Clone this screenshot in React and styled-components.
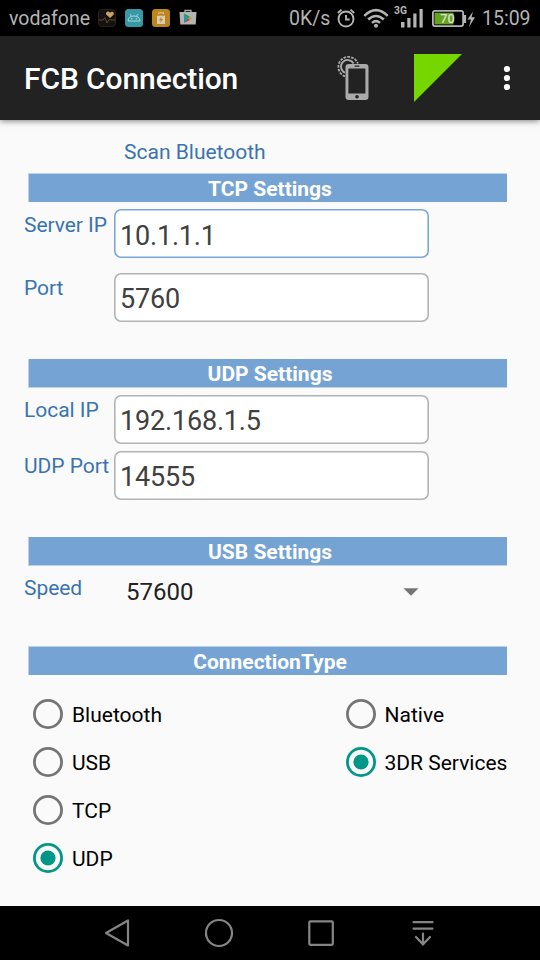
import React, { useState } from "react";
import styled, { createGlobalStyle } from "styled-components";

const GlobalStyle = createGlobalStyle`
  * { box-sizing: border-box; }
  body { margin: 0; background: #fafafa; font-family: Roboto, "Liberation Sans", sans-serif; }
`;

const Screen = styled.div`
  width: 540px;
  height: 960px;
  display: flex;
  flex-direction: column;
  overflow: hidden;
  background: #fafafa;
`;

const StatusBar = styled.header`
  height: 36px;
  flex: none;
  display: flex;
  align-items: center;
  justify-content: space-between;
  padding: 0 9px;
  background: #000;
  color: #b4b4b4;
`;

const StatusGroup = styled.div`
  display: flex;
  align-items: center;
`;

const StatusText = styled.span`
  font-size: 19.5px;
  line-height: 36px;
  padding-top: 1px;
  height: 36px;
  width: ${(p) => p.$width}px;
  margin-left: ${(p) => p.$gap || 0}px;
  white-space: nowrap;
`;

const StatusIcon = styled.svg`
  display: block;
  flex: none;
  margin-left: ${(p) => p.$gap || 0}px;
`;

const Toolbar = styled.div`
  height: 84px;
  flex: none;
  display: flex;
  align-items: center;
  padding-left: 24px;
  background: #222;
  box-shadow: 0 1px 6px rgba(0, 0, 0, 0.5);
`;

const Title = styled.h1`
  margin: 2px 0 0;
  width: 306px;
  font-size: 30px;
  line-height: 36px;
  font-weight: 500;
  letter-spacing: -0.1px;
  color: #fff;
  white-space: nowrap;
`;

const ToolIcon = styled.svg`
  display: block;
  flex: none;
  margin-left: ${(p) => p.$gap || 0}px;
`;

const Content = styled.main`
  flex: 1;
  padding: 20px 33px 0 24px;
  color: #3a74b0;
`;

const ScanButton = styled.button`
  display: block;
  height: 33px;
  margin: 0 0 0 100px;
  padding: 0 0 9px;
  border: 0;
  background: none;
  font: inherit;
  font-size: 21px;
  line-height: 24px;
  color: inherit;
`;

const Section = styled.section`
  height: ${(p) => p.$height}px;
`;

const SectionBar = styled.h2`
  height: 29px;
  margin: 0 0 0 4px;
  border: 0 solid #bcd2e9;
  border-left-width: 1px;
  border-top-width: ${(p) => (p.$edge === "top" ? 1 : 0)}px;
  border-bottom-width: ${(p) => (p.$edge === "bottom" ? 1 : 0)}px;
  padding-top: 1px;
  padding-left: 4px;
  background: #75a3d3;
  color: #fff;
  font-size: 21px;
  line-height: 28px;
  font-weight: 700;
  text-align: center;
`;

const Field = styled.div`
  display: flex;
  margin-top: ${(p) => p.$gap}px;
`;

const Label = styled.label`
  flex: none;
  width: 90px;
  padding-top: ${(p) => (p.$active ? 4 : 3)}px;
  font-size: 21px;
  line-height: 24px;
  letter-spacing: -0.05px;
  white-space: nowrap;
`;

const Input = styled.input`
  width: 315px;
  height: 49px;
  padding: ${(p) => (p.$active ? 4 : 3)}px 6px 0;
  border: 0;
  border-radius: 7px;
  outline: 0;
  background: #fff;
  box-shadow: inset 0 0 0 1.6px ${(p) => (p.$active ? "#7ba7d7" : "#b3b3b3")};
  color: #404040;
  font-family: inherit;
  font-size: 27px;
  letter-spacing: -0.18px;
`;

const Spinner = styled.div`
  display: flex;
  align-items: center;
  justify-content: space-between;
  width: 315px;
  height: 37px;
  padding: 0 10px 0 12px;
  color: #222;
  font-size: 24px;
`;

const RadioColumns = styled.div`
  display: grid;
  grid-template-columns: 312.5px 1fr;
  align-items: start;
  padding: 15px 0 0 9px;
`;

const RadioOption = styled.label`
  display: flex;
  align-items: center;
  gap: 9px;
  height: 48px;
  color: #000;
  font-size: 21px;
  line-height: 24px;
  white-space: nowrap;
  span { padding-top: 2px; }
  svg { flex: none; }
`;

const NavBar = styled.nav`
  height: 54px;
  flex: none;
  display: flex;
  align-items: center;
  justify-content: space-between;
  padding: 0 102px;
  background: #000;
`;

const NavIcon = styled.svg`
  width: 30px;
  height: 34px;
  fill: none;
  stroke: #858585;
  stroke-width: 2.2;
  stroke-linecap: round;
`;

function Radio({ label, checked, onSelect }) {
  const color = checked ? "#009688" : "#757575";
  return (
    <RadioOption onClick={onSelect}>
      <svg width="30" height="30" viewBox="0 0 30 30">
        <circle cx="15" cy="15" r="13.6" fill="none" stroke={color} strokeWidth="2.8" />
        {checked && <circle cx="15" cy="15" r="7.6" fill={color} />}
      </svg>
      <span>{label}</span>
    </RadioOption>
  );
}

function TextField({ label, value, gap, active }) {
  return (
    <Field $gap={gap}>
      <Label $active={active}>{label}</Label>
      <Input defaultValue={value} $active={active} aria-label={label} />
    </Field>
  );
}

function StatusRow() {
  return (
    <StatusBar>
      <StatusGroup>
        <StatusText $width={89}>vodafone</StatusText>
        <StatusIcon width="18" height="18" viewBox="0 0 18 18">
          <rect x=".5" y=".5" width="17" height="17" rx="3.5" fill="#14110f" stroke="#2b2016" />
          <path d="M12 9 L8.2 5.5 Q7.5 3 9.7 2.5 Q11.3 2.4 12 3.8 Q13 2.4 14.5 2.7 Q16.5 3.5 15.5 5.8Z" fill="#c7a365" />
          <path d="M1 11H5L7 8.5 9 14 11 10.5 13 11H17" fill="none" stroke="#5b4a38" />
        </StatusIcon>
        <StatusIcon $gap={9} width="18" height="18" viewBox="0 0 18 18">
          <rect width="18" height="18" rx="3.5" fill="#359aa5" />
          <path d="M3 12Q3.3 7 9 7T15 12ZM5 5L6.7 7.5M13 5L11.3 7.5" fill="none" stroke="#b3d4d5" />
          <circle cx="6.7" cy="9.7" r=".7" fill="#b3d4d5" />
          <circle cx="11.3" cy="9.7" r=".7" fill="#b3d4d5" />
        </StatusIcon>
        <StatusIcon $gap={9} width="18" height="18" viewBox="0 0 18 18">
          <rect width="18" height="18" rx="3.5" fill="#bd861d" />
          <path d="M6.5 5V3.8H11.5V5" fill="none" stroke="#d9cdb8" />
          <path d="M5 6.7H13V15H5Z" fill="#d9cdb8" />
          <path d="M9.8 7.5L6.9 11.2H8.7L8.2 14 11.1 10H9.2Z" fill="#bd861d" />
        </StatusIcon>
        <StatusIcon $gap={9} width="18" height="18" viewBox="0 0 18 18">
          <path d="M6 4V1.5H12V4" fill="none" stroke="#aaa" strokeWidth="1.3" />
          <path d="M.5 3H17.5L16.7 15.5H1.3Z" fill="#b4b4b4" />
          <path d="M5 4.5L9 9.3 5 14Z" fill="#159cb4" />
          <path d="M5 4.5L11 7.8 9 9.3Z" fill="#278d4e" />
          <path d="M5 14L9 9.3 11 10.9Z" fill="#bd3f31" />
          <path d="M11 7.8L13 9.3 11 10.9 9 9.3Z" fill="#c99c28" />
        </StatusIcon>
      </StatusGroup>
      <StatusGroup>
        <StatusText $width={48}>0K/s</StatusText>
        <StatusIcon width="18" height="20" viewBox="0 0 18 20" fill="none" stroke="#b4b4b4" strokeWidth="1.9">
          <circle cx="9" cy="11" r="7.5" />
          <path d="M9 7V11.5H12.7M.8 5L4.5 1.6M17.2 5L13.5 1.6" />
        </StatusIcon>
        <StatusIcon $gap={8} width="26" height="20" viewBox="0 0 26 20" fill="none" stroke="#b4b4b4" strokeWidth="2.5">
          <path d="M1.3 7.8Q13 -3.5 24.7 7.8M5.2 11.5Q13 4.4 20.8 11.5M9 14.9Q13 11.4 17 14.9" />
          <circle cx="13" cy="17.7" r="2" fill="#b4b4b4" stroke="none" />
        </StatusIcon>
        <StatusIcon $gap={5} width="30" height="26" viewBox="0 0 30 26" fill="#b4b4b4">
          <text x="0" y="8.7" fontSize="10.5" fontWeight="700" fontFamily="Roboto, sans-serif" textLength="13" lengthAdjust="spacingAndGlyphs">3G</text>
          <rect x="7" y="17" width="3.5" height="5.5" />
          <rect x="13.3" y="13" width="3.2" height="9.5" />
          <rect x="19.3" y="8.5" width="3.2" height="14" />
          <rect x="25.5" y="4" width="3.2" height="18.5" />
        </StatusIcon>
        <StatusIcon $gap={8} width="44" height="20" viewBox="0 0 44 20">
          <rect x=".9" y="2.9" width="30.2" height="15.2" rx="2" fill="none" stroke="#b4b4b4" strokeWidth="1.8" />
          <rect x="31.8" y="7" width="2.3" height="8" fill="#b4b4b4" />
          <rect x="2.5" y="4.7" width="19" height="11.7" fill="#64a41a" />
          <text x="8.3" y="15.3" fontSize="13.5" fontWeight="500" fontFamily="Roboto, sans-serif" fill="#ddd" textLength="14.5" lengthAdjust="spacingAndGlyphs">70</text>
          <path d="M41 3.5L35.5 11.5H39L37 19 43 9.3H39.5Z" fill="#b4b4b4" />
        </StatusIcon>
        <StatusText $gap={6} $width={49}>15:09</StatusText>
      </StatusGroup>
    </StatusBar>
  );
}

export default function App() {
  const [type, setType] = useState("UDP");
  const [service, setService] = useState("3DR Services");
  return (
    <Screen>
      <GlobalStyle />
      <StatusRow />
      <Toolbar>
        <Title>FCB Connection</Title>
        <ToolIcon $gap={6} width="34" height="48" viewBox="0 0 34 48">
          <g fill="none" stroke="#aaa">
            <path d="M9 22.3A10 10 0 1 1 21.8 9.5" strokeWidth="1.8" strokeDasharray="2.6 1.2" />
            <path d="M9 18.8A6.7 6.7 0 1 1 17.6 9.5" strokeWidth="1.8" />
          </g>
          <rect x="9.5" y="10" width="23" height="36" rx="3.2" fill="#aaa" />
          <rect x="12.4" y="14.5" width="17" height="25" fill="#222" />
          <rect x="18.5" y="11.6" width="5" height="1.2" rx=".6" fill="#222" />
          <circle cx="21" cy="42.8" r="1.8" fill="#222" />
        </ToolIcon>
        <ToolIcon $gap={44} width="48" height="48" viewBox="0 0 48 48">
          <path d="M0 0H48L0 48Z" fill="#76d600" />
        </ToolIcon>
        <ToolIcon $gap={42} width="6" height="26" viewBox="0 0 6 26" fill="#fff" overflow="visible">
          <circle cx="3" cy="4" r="3.1" />
          <circle cx="3" cy="13" r="3.1" />
          <circle cx="3" cy="22" r="3.1" />
        </ToolIcon>
      </Toolbar>
      <Content>
        <ScanButton>Scan Bluetooth</ScanButton>
        <Section $height={186}>
          <SectionBar $edge="top">TCP Settings</SectionBar>
          <TextField label="Server IP" value="10.1.1.1" gap={7} active />
          <TextField label="Port" value="5760" gap={15} />
        </Section>
        <Section $height={178}>
          <SectionBar $edge="bottom">UDP Settings</SectionBar>
          <TextField label="Local IP" value="192.168.1.5" gap={7} />
          <TextField label="UDP Port" value="14555" gap={7} />
        </Section>
        <Section $height={109}>
          <SectionBar $edge="bottom">USB Settings</SectionBar>
          <Field $gap={7}>
            <Label>Speed</Label>
            <Spinner>
              57600
              <svg width="16" height="8" viewBox="0 0 16 8">
                <path d="M.5 .3H15.5L8 7.7Z" fill="#757575" />
              </svg>
            </Spinner>
          </Field>
        </Section>
        <SectionBar $edge="top">ConnectionType</SectionBar>
        <RadioColumns>
          <div>
            {["Bluetooth", "USB", "TCP", "UDP"].map((name) => (
              <Radio key={name} label={name} checked={type === name} onSelect={() => setType(name)} />
            ))}
          </div>
          <div>
            {["Native", "3DR Services"].map((name) => (
              <Radio key={name} label={name} checked={service === name} onSelect={() => setService(name)} />
            ))}
          </div>
        </RadioColumns>
      </Content>
      <NavBar>
        <NavIcon viewBox="0 0 30 34">
          <path d="M26 4.5V29.5L4 17Z" strokeLinejoin="round" />
        </NavIcon>
        <NavIcon viewBox="0 0 30 34">
          <circle cx="15" cy="17" r="13" />
        </NavIcon>
        <NavIcon viewBox="0 0 30 34">
          <rect x="3.3" y="5.3" width="23.5" height="23.5" rx="1" />
        </NavIcon>
        <NavIcon viewBox="0 0 30 34">
          <path d="M5.5 6.2H24.5M5.5 12.6H24.5M15 17.5V28M8 21L15 28.3 22 21" />
        </NavIcon>
      </NavBar>
    </Screen>
  );
}
